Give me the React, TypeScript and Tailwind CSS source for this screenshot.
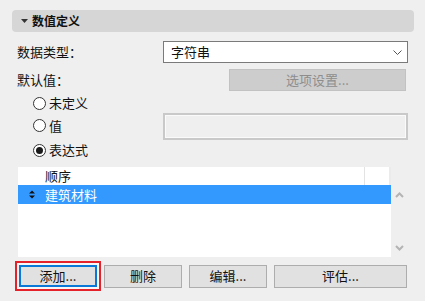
import React from 'react';

const Radio = ({ label, checked }: { label: string; checked?: boolean }) => (
  <div className="flex items-center">
    <span className="w-[13px] h-[13px] rounded-full border border-[#333333] bg-white flex items-center justify-center">
      {checked && <span className="w-[7px] h-[7px] rounded-full bg-[#1a1a1a]" />}
    </span>
    <span className="ml-[3px] text-[13px] text-[#111111]">{label}</span>
  </div>
);

const Chevron = ({ up }: { up?: boolean }) => (
  <svg width="9" height="6" viewBox="0 0 9 6" className="block">
    <path
      d={up ? 'M1 5 L4.5 1.5 L8 5' : 'M1 1 L4.5 4.5 L8 1'}
      fill="none"
      stroke="#b4b4b4"
      strokeWidth="2"
    />
  </svg>
);

export default function App() {
  return (
    <div
      className="w-[425px] h-[301px] bg-[#efefef] overflow-hidden pt-[10px] text-[#111111]"
      style={{ fontFamily: '"Noto Sans CJK SC", "Noto Sans", sans-serif' }}
    >
      {/* section header */}
      <div className="ml-[12px] w-[402px] h-[22px] rounded-[4px] bg-[#d6d6d6] flex items-center">
        <svg width="7" height="4" viewBox="0 0 7 4" className="ml-[9px]">
          <path d="M0 0 L7 0 L3.5 4 Z" fill="#333333" />
        </svg>
        <span className="ml-[4px] text-[12px] font-bold leading-none">数值定义</span>
      </div>

      {/* data type */}
      <div className="mt-[9px] h-[22px] flex items-center">
        <span className="ml-[17px] w-[146px] text-[13px]">数据类型：</span>
        <div className="w-[245px] h-[22px] bg-white border border-[#7a7a7a] flex items-center justify-between pl-[7px] pr-[5px]">
          <span className="text-[13px]">字符串</span>
          <svg width="9" height="5" viewBox="0 0 9 5">
            <path d="M0.5 0.5 L4.5 4.5 L8.5 0.5" fill="none" stroke="#555555" strokeWidth="1" />
          </svg>
        </div>
      </div>

      {/* default value */}
      <div className="mt-[6px] h-[22px] flex items-center">
        <span className="ml-[17px] w-[212px] text-[13px]">默认值：</span>
        <div className="w-[177px] h-[22px] bg-[#cdcdcd] border border-[#c2c2c2] flex items-center justify-center">
          <span className="text-[13px] text-[#8d8d8d]">选项设置...</span>
        </div>
      </div>

      {/* radios */}
      <div className="mt-[2px] ml-[33px] h-[20px] flex items-center">
        <Radio label="未定义" />
      </div>
      <div className="h-[27px] flex items-center">
        <div className="ml-[33px] w-[130px] -mt-[2px]">
          <Radio label="值" />
        </div>
        <div className="w-[245px] h-[27px] border-2 border-[#c9c9c9] bg-[#efefef]">
          <div className="w-full h-full border border-[#fafafa]" />
        </div>
      </div>
      <div className="ml-[33px] h-[20px] flex items-center">
        <Radio label="表达式" checked />
      </div>

      {/* list */}
      <div className="mt-[7px] flex">
        <div className="ml-[18px] w-[373px] h-[90px] bg-white">
          <div className="h-[18px] flex items-stretch">
            <div className="w-[347px] border-r border-[#e3e3e3] flex items-center pl-[27px] text-[13px]">
              顺序
            </div>
            <div className="w-[24px]" />
            <div className="w-[2px] bg-[#ebebeb]" />
          </div>
          <div className="h-[19px] bg-[#3399ff] flex items-center">
            <svg width="6" height="9" viewBox="0 0 6 9" className="ml-[11px]">
              <path d="M0 3.5 L3 0.5 L6 3.5 Z M0 5.5 L3 8.5 L6 5.5 Z" fill="#111111" />
            </svg>
            <span className="ml-[10px] text-[13px] text-white">建筑材料</span>
          </div>
        </div>
        <div className="ml-[4px] h-[90px] flex flex-col justify-between pt-[25px] pb-[6px]">
          <Chevron up />
          <Chevron />
        </div>
      </div>

      {/* buttons */}
      <div className="mt-[4px] flex items-center">
        <div className="ml-[15px] border-2 border-[#e5222a] p-[2px] bg-[#f7f7f7]">
          <div className="w-[78px] h-[22px] border-2 border-[#0a78d7] bg-[#e1e1e1] flex items-center justify-center text-[13px]">
            添加...
          </div>
        </div>
        <div className="ml-[3px] w-[78px] h-[23px] border border-[#adadad] bg-[#e1e1e1] flex items-center justify-center text-[13px]">
          删除
        </div>
        <div className="ml-[7px] w-[78px] h-[23px] border border-[#adadad] bg-[#e1e1e1] flex items-center justify-center text-[13px]">
          编辑...
        </div>
        <div className="ml-[7px] w-[133px] h-[23px] border border-[#adadad] bg-[#e1e1e1] flex items-center justify-center text-[13px]">
          评估...
        </div>
      </div>
    </div>
  );
}
